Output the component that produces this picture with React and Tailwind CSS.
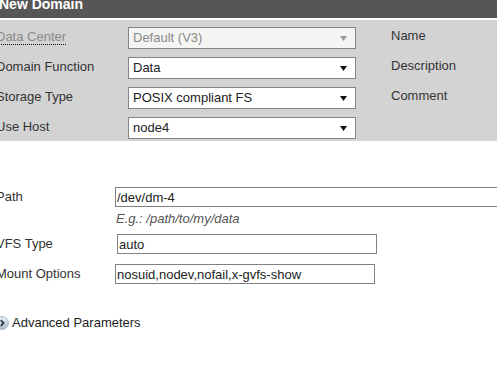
import React from "react";

function Select({ value, disabled }) {
  return (
    <div
      className={
        "relative flex h-[22px] w-[228px] items-center border border-[#858585] pl-[4px] " +
        (disabled ? "bg-[#f4f4f2] text-[#8a8a8a]" : "bg-white text-[#222]")
      }
    >
      <span className="leading-[20px]">{value}</span>
      <svg
        className="absolute right-[8px] top-[8px]"
        width="7"
        height="5"
        viewBox="0 0 7 5"
      >
        <path d="M0 0H7L3.5 5Z" fill={disabled ? "#9a9a9a" : "#111"} />
      </svg>
    </div>
  );
}

function TopRow({ label, value, disabled, right }) {
  return (
    <div className="flex h-[22px] items-start">
      <div className="ml-[-4px] w-[132px] shrink-0">
        {disabled ? (
          <span className="border-b border-dotted border-[#111] leading-[17px] text-[#8a8a8a]">
            {label}
          </span>
        ) : (
          <span className="leading-[17px] text-[#333]">{label}</span>
        )}
      </div>
      <Select value={value} disabled={disabled} />
      <div className="ml-[35px] leading-[17px] text-[#333]">{right}</div>
    </div>
  );
}

export default function App() {
  return (
    <div
      className="relative h-[378px] w-[497px] overflow-hidden bg-white text-[13px]"
      style={{ fontFamily: '"Liberation Sans", Arial, sans-serif' }}
    >
      <div className="h-[18px] overflow-hidden bg-[#565656]">
        <div className="ml-[-1px] mt-[-4px] text-[14px] font-bold leading-[16px] text-white">
          New Domain
        </div>
      </div>
      <div className="mt-[2px] flex h-[121px] flex-col gap-[8px] bg-[#d3d3d3] pt-[7px]">
        <TopRow label="Data Center" value="Default (V3)" disabled right="Name" />
        <TopRow label="Domain Function" value="Data" right="Description" />
        <TopRow label="Storage Type" value="POSIX compliant FS" right="Comment" />
        <TopRow label="Use Host" value="node4" right="" />
      </div>

      <div className="mt-[46px] flex flex-col">
        <div className="flex h-[20px] items-center">
          <div className="ml-[-4px] w-[119px] shrink-0 leading-[18px] text-[#333]">Path</div>
          <div className="h-[20px] w-[400px] shrink-0 border border-[#808080] pl-[1px] leading-[19px] text-[#222]">
            /dev/dm-4
          </div>
        </div>
        <div className="h-[27px] pl-[116px] italic leading-[23px] text-[#555]">
          E.g.: /path/to/my/data
        </div>
        <div className="flex h-[20px] items-center">
          <div className="ml-[-4px] w-[121px] shrink-0 leading-[18px] text-[#333]">VFS Type</div>
          <div className="h-[20px] w-[260px] shrink-0 border border-[#808080] pl-[1px] leading-[19px] text-[#222]">
            auto
          </div>
        </div>
        <div className="mt-[10px] flex h-[20px] items-center">
          <div className="ml-[-4px] w-[119px] shrink-0 leading-[18px] text-[#333]">Mount Options</div>
          <div className="h-[20px] w-[260px] shrink-0 border border-[#808080] pl-[1px] leading-[19px] text-[#222]">
            nosuid,nodev,nofail,x-gvfs-show
          </div>
        </div>
        <div className="mt-[30px] flex h-[18px] items-center">
          <svg className="ml-[-5px] shrink-0" width="14" height="14" viewBox="0 0 14 14">
            <defs>
              <linearGradient id="g" x1="0" y1="0" x2="0" y2="1">
                <stop offset="0" stopColor="#eef3f8" />
                <stop offset="1" stopColor="#aebdcc" />
              </linearGradient>
            </defs>
            <circle cx="7" cy="7" r="6.3" fill="url(#g)" stroke="#8b9aab" strokeWidth="0.8" />
            <path d="M5.8 4.2L8.6 7L5.8 9.8" fill="none" stroke="#2b3a4a" strokeWidth="1.8" />
          </svg>
          <span className="ml-[3px] leading-[18px] text-[#222]">Advanced Parameters</span>
        </div>
      </div>
    </div>
  );
}
